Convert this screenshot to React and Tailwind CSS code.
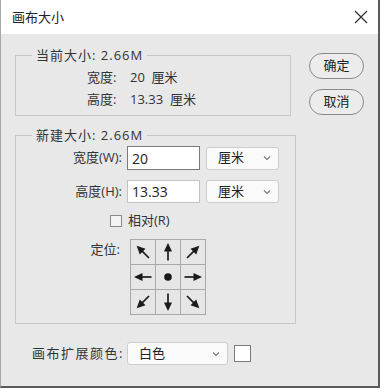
import React from "react";

function Arrow({ rot }) {
  return (
    <svg width="24" height="24" viewBox="0 0 24 24">
      <g transform={`rotate(${rot} 12 12)`}>
        <line x1="12" y1="20.5" x2="12" y2="9" stroke="#1a1a1a" strokeWidth="1.7" />
        <polygon points="12,3 8,11.5 16,11.5" fill="#1a1a1a" />
      </g>
    </svg>
  );
}

function Dot() {
  return (
    <svg width="24" height="24" viewBox="0 0 24 24">
      <circle cx="12" cy="12" r="3.8" fill="#1a1a1a" />
    </svg>
  );
}

function Chevron() {
  return (
    <svg width="8" height="6" viewBox="0 0 8 6">
      <polyline points="1,1.5 4,4.5 7,1.5" fill="none" stroke="#777" strokeWidth="1.1" />
    </svg>
  );
}

function Select({ label, w }) {
  return (
    <div
      className={`flex h-[23px] items-center justify-between rounded-[3px] border border-[#cdcdcd] bg-[#fafafa] pl-[11px] pr-[7px] ${w}`}
    >
      <span className="text-[13px] text-[#222]">{label}</span>
      <Chevron />
    </div>
  );
}

export default function App() {
  const rots = [-45, 0, 45, -90, null, 90, -135, 180, 135];
  return (
    <div className="h-[392px] w-[384px] bg-white font-['Open_Sans','Noto_Sans_CJK_SC',sans-serif] text-[13px] text-[#333]">
      <div className="flex h-[388px] w-[380px] flex-col border-l border-[#a8a8a8] border-r-2 border-b-2 border-r-[#5a5a5a] border-b-[#5a5a5a]">
        {/* title bar */}
        <div className="flex h-[34px] items-center justify-between bg-white pl-[11px] pr-[10px]">
          <span className="text-[13px] leading-none text-[#222]">画布大小</span>
          <svg width="14" height="14" viewBox="0 0 14 14">
            <line x1="1" y1="1" x2="13" y2="13" stroke="#333" strokeWidth="1.2" />
            <line x1="13" y1="1" x2="1" y2="13" stroke="#333" strokeWidth="1.2" />
          </svg>
        </div>
        {/* body */}
        <div className="flex flex-1 flex-col bg-[#e8e8e8] pl-[14px] pt-[12px]">
          <div className="flex">
            <div className="flex w-[276px] flex-col">
              <fieldset className="border border-[#c8c8c8] px-[16px]">
                <legend className="px-[4px] leading-[18px] tracking-[1px] text-[#333]">当前大小: 2.66M</legend>
                <div className="flex flex-col pb-[4px] pl-[55px] pt-[3px]">
                  <div className="flex h-[22px] items-center">
                    <span className="w-[43px]">宽度:</span>
                    <span>20&nbsp; 厘米</span>
                  </div>
                  <div className="flex h-[22px] items-center">
                    <span className="w-[43px]">高度:</span>
                    <span>13.33&nbsp; 厘米</span>
                  </div>
                </div>
              </fieldset>
              <fieldset className="mt-[10px] border border-[#c8c8c8] px-[16px]">
                <legend className="px-[4px] leading-[18px] tracking-[1px] text-[#333]">新建大小: 2.66M</legend>
                <div className="flex flex-col pb-[8px] pt-[2px]">
                  <div className="flex items-center">
                    <span className="w-[90px] text-right">宽度(W):</span>
                    <div className="ml-[5px] flex h-[24px] w-[73px] items-center border border-[#7a7a7a] bg-white pl-[4px] text-[14px] text-[#222]">
                      20
                    </div>
                    <div className="ml-[6px]">
                      <Select label="厘米" w="w-[73px]" />
                    </div>
                  </div>
                  <div className="mt-[10px] flex items-center">
                    <span className="w-[90px] text-right">高度(H):</span>
                    <div className="ml-[5px] flex h-[23px] w-[73px] items-center border border-[#c4c4c4] bg-white pl-[4px] text-[14px] text-[#222]">
                      13.33
                    </div>
                    <div className="ml-[6px]">
                      <Select label="厘米" w="w-[73px]" />
                    </div>
                  </div>
                  <div className="mt-[10px] flex h-[16px] items-center pl-[78px]">
                    <div className="h-[12px] w-[12px] border border-[#8a8a8a] bg-[#f4f4f4]" />
                    <span className="ml-[6px]">相对(R)</span>
                  </div>
                  <div className="mt-[10px] flex items-start">
                    <span className="w-[88px] pt-[1px] text-right">定位:</span>
                    <div className="ml-[10px] grid w-[76px] grid-cols-3 gap-[1px] bg-[#a9a9a9] p-[1px]">
                      {rots.map((r, i) => (
                        <div key={i} className="flex h-[24px] w-[24px] items-center justify-center bg-[#e6e6e6]">
                          {r === null ? <Dot /> : <Arrow rot={r} />}
                        </div>
                      ))}
                    </div>
                  </div>
                </div>
              </fieldset>
            </div>
            <div className="ml-[18px] mt-[7px] flex flex-col gap-[10px]">
              <div className="flex h-[26px] w-[55px] items-center justify-center rounded-full border border-[#8a8a8a] bg-[#ececec] text-[#222]">
                确定
              </div>
              <div className="flex h-[26px] w-[55px] items-center justify-center rounded-full border border-[#8a8a8a] bg-[#ececec] text-[#222]">
                取消
              </div>
            </div>
          </div>
          <div className="ml-[17px] mt-[18px] flex items-center">
            <span className="tracking-[1.5px]">画布扩展颜色:</span>
            <div className="ml-[3px]">
              <Select label="白色" w="w-[101px]" />
            </div>
            <div className="ml-[6px] h-[17px] w-[17px] border border-[#7a7a7a] bg-white" />
          </div>
        </div>
      </div>
    </div>
  );
}
